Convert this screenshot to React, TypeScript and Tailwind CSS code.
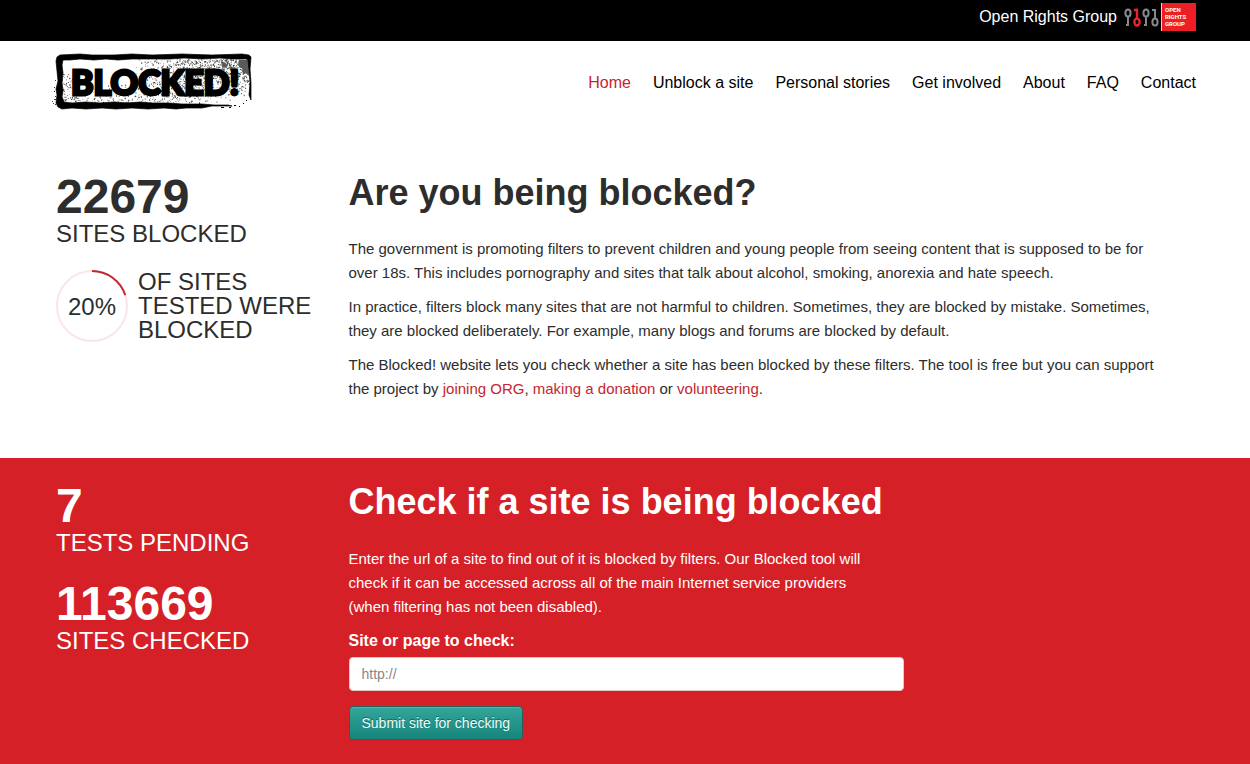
import type { ReactNode } from 'react';

const navItems = [
  { label: 'Home', href: '#home', active: true },
  { label: 'Unblock a site', href: '#unblock' },
  { label: 'Personal stories', href: '#stories' },
  { label: 'Get involved', href: '#involved' },
  { label: 'About', href: '#about' },
  { label: 'FAQ', href: '#faq' },
  { label: 'Contact', href: '#contact' },
];

// Fixed seed, so the stamp always gets the same ink specks
function makeSpecks() {
  let seed = 7;
  const random = () => {
    seed = (seed * 16807) % 2147483647;
    return seed / 2147483647;
  };
  const specks: { x: number; y: number; size: number }[] = [];
  for (let i = 0; i < 7000; i++) {
    const x = 9 + random() * 188;
    const y = 6 + random() * 45;
    const u = x / 198;
    const v = y / 56;
    // dense towards the top right corner, with a band fading to the bottom left
    const top = u > 0.42 ? Math.min(0.75, (u - 0.38) * 1.6) * Math.max(0, 1.05 - v * 1.3) : 0;
    const band = Math.max(0, 0.35 - Math.abs(v - 0.8 + (u - 0.45) * 0.6)) * (u > 0.8 ? 0.4 : 1);
    const edge = u < 0.12 && v > 0.35 ? 0.14 : 0;
    if (random() < top + band * 0.8 + edge) {
      specks.push({ x, y, size: 0.5 + random() * 0.7 });
    }
  }
  return specks;
}

const specks = makeSpecks();

function BlockedLogo() {
  return (
    <svg width="200" height="58" viewBox="0 0 200 58" role="img" aria-label="Blocked!">
      <g fill="#3a3a3a">
        {specks.map((s, i) => (
          <rect key={i} x={s.x} y={s.y} width={s.size} height={s.size} />
        ))}
        <path d="M187 7H197V23L194 20 191 22 190 15 186 12zM169 8L174 10 175 15 170 14zM178 12L181 15 179 18z" fill="#5a5a5a" />
        <path d="M3 27h1v1h-1zM2 38h1v1h-1zM3 43h1v1h-1zM2 46h2v1h-2zM0 48h1v1h-1zM2 34h1v1h-1zM3 51h1v1h-1zM1 50h1v1h-1z" />
      </g>
      <path
        fill="#000"
        stroke="#000"
        strokeWidth="0.700"
        fillRule="evenodd"
        d="M8 2L28 1 40 2 62 2 80 1 100 2 130 1 160 2 190 1 197 2 199 4 198 16 199 30 199 47 197 42 198 30 197 17 196 7 194 6 180 6 168 5 150 6 132 5 118 6 100 6 80 6 66 7 54 6 42 7 28 6 18 7 11 7 10 12 11 20 10 30 11 38 10 44 12 49 20 50 34 49 48 50 62 49 74 50 88 49 100 50 116 50 130 51 150 51 162 52 176 52 180 53 160 53 150 55 134 55 124 56 112 55 96 56 80 55 64 56 50 55 34 56 20 55 10 56 6 54 4 50 5 42 4 36 6 28 5 18 4 8 5 4z"
      />
      <path d="M182 52h2v1h-2zM187 53h1v1h-1zM177 54h2v1h-2zM169 54h3v1h-3zM191 50h1v1h-1zM194 47h1v1h-1z" />
      <text
        x="19"
        y="42"
        className="font-['Lato',sans-serif] text-[34px] font-black"
        fill="#000"
        stroke="#000"
        strokeWidth="2.800"
      >
        BLOCKED!
      </text>
    </svg>
  );
}

function OrgLogo() {
  return (
    <svg width="73" height="28" viewBox="0 0 73 28" role="img" aria-label="Open Rights Group logo">
      <g fill="none" strokeWidth="2" stroke="#85898b">
        <ellipse cx="5" cy="10" rx="2.600" ry="3.500" />
        <path d="M5 13.500V23M6 22h-3" />
        <ellipse cx="23" cy="10" rx="2.600" ry="3.500" />
        <path d="M23 13.500V23M24 22h-3" />
        <ellipse cx="32" cy="19" rx="2.600" ry="3.500" />
        <path d="M32 15.500V6M32 7h-3" />
      </g>
      <g fill="none" strokeWidth="2.400" stroke="#e0282b">
        <ellipse cx="14" cy="19" rx="2.600" ry="3.500" />
        <path d="M14 15.500V5.500M14 7h-3" />
      </g>
      <path fill="#ed1f24" d="M39 0h34v28H39z" />
      <path fill="#f8c9ca" d="M38 0h1v28h-1z" />
      <g fill="#fff" className="font-['Roboto',sans-serif] text-[6px] font-bold">
        <text x="42" y="9">OPEN</text>
        <text x="42" y="16">RIGHTS</text>
        <text x="42" y="23">GROUP</text>
      </g>
    </svg>
  );
}

function Container({ children, className = '' }: { children: ReactNode; className?: string }) {
  return <div className={`mx-auto w-full max-w-[1172px] pr-[15px] pl-[17px] ${className}`}>{children}</div>;
}

function Stat({ value, label }: { value: string; label: string }) {
  return (
    <div>
      <div className="text-5xl leading-[50px] font-bold">{value}</div>
      <div className="text-2xl leading-6 uppercase">{label}</div>
    </div>
  );
}

function PercentRing({ percent }: { percent: number }) {
  return (
    <svg width="72" height="72" viewBox="0 0 72 72" className="shrink-0">
      <circle cx="36" cy="36" r="35" fill="none" stroke="#fbe6e7" strokeWidth="2" />
      <circle
        cx="36"
        cy="36"
        r="35"
        fill="none"
        stroke="#c4262e"
        strokeWidth="2"
        pathLength="100"
        strokeDasharray={`${percent} 100`}
        transform="rotate(-90 36 36)"
      />
      <text x="36" y="45" textAnchor="middle" fill="#2d2d2d" className="text-2xl">
        {percent}%
      </text>
    </svg>
  );
}

function TextLink({ href, children }: { href: string; children: ReactNode }) {
  return (
    <a href={href} className="text-[#c4262e] hover:underline">
      {children}
    </a>
  );
}

export default function App() {
  return (
    <div className="flex min-h-screen flex-col bg-white font-['Liberation_Sans',Arial,sans-serif] text-base text-[#2d2d2d]">
      <div className="bg-black text-white">
        <Container className="flex justify-end pt-[3px] pb-2.5">
          <a href="#org" className="flex items-center gap-1.5">
            <span>Open Rights Group</span>
            <OrgLogo />
          </a>
        </Container>
      </div>

      <header>
        <Container className="flex items-start justify-between pt-3">
          <a href="#home" className="-ml-1">
            <BlockedLogo />
          </a>
          <nav className="flex gap-[22px] pt-[18px]">
            {navItems.map((item) => (
              <a key={item.label} href={item.href} className={item.active ? 'text-[#c4262e]' : 'text-black'}>
                {item.label}
              </a>
            ))}
          </nav>
        </Container>
      </header>

      <section className="pt-[61px] pb-[57px]">
        <Container className="grid grid-cols-4 gap-x-[30px]">
          <div className="flex flex-col gap-6">
            <Stat value="22679" label="Sites blocked" />
            <div className="flex gap-2.5">
              <PercentRing percent={20} />
              <div className="text-2xl leading-6 uppercase">Of sites tested were blocked</div>
            </div>
          </div>
          <div className="col-span-3">
            <h1 className="mb-[23px] text-4xl leading-[42px] font-bold">Are you being blocked?</h1>
            <div className="flex flex-col gap-2.5 text-[15px] leading-6">
              <p>
                The government is promoting filters to prevent children and young people from seeing content that is
                supposed to be for
                <br className="hidden lg:inline" /> over 18s. This includes pornography and sites that talk about
                alcohol, smoking, anorexia and hate speech.
              </p>
              <p>
                In practice, filters block many sites that are not harmful to children. Sometimes, they are blocked by
                mistake. Sometimes,
                <br className="hidden lg:inline" /> they are blocked deliberately. For example, many blogs and forums
                are blocked by default.
              </p>
              <p>
                The Blocked! website lets you check whether a site has been blocked by these filters. The tool is free
                but you can support
                <br className="hidden lg:inline" /> the project by <TextLink href="#join">joining ORG</TextLink>,{' '}
                <TextLink href="#donate">making a donation</TextLink> or{' '}
                <TextLink href="#volunteer">volunteering</TextLink>.
              </p>
            </div>
          </div>
        </Container>
      </section>

      <section className="grow bg-[#d52027] pt-[23px] pb-6 text-white">
        <Container className="grid grid-cols-4 gap-x-[30px]">
          <div className="flex flex-col gap-6">
            <Stat value="7" label="Tests pending" />
            <Stat value="113669" label="Sites checked" />
          </div>
          <form className="col-span-2" onSubmit={(e) => e.preventDefault()}>
            <h2 className="mb-6 text-4xl leading-[42px] font-bold">Check if a site is being blocked</h2>
            <p className="text-[15px] leading-6">
              Enter the url of a site to find out of it is blocked by filters. Our Blocked tool will
              <br className="hidden lg:inline" /> check if it can be accessed across all of the main Internet service
              providers
              <br className="hidden lg:inline" /> (when filtering has not been disabled).
            </p>
            <label htmlFor="site-url" className="mt-2.5 mb-1 block font-bold">
              Site or page to check:
            </label>
            <input
              id="site-url"
              type="text"
              placeholder="http://"
              className="block h-[34px] w-full rounded border border-[#e8c4c4] bg-white px-3 text-sm text-[#555] placeholder:text-[#888]"
            />
            <button
              type="submit"
              className="mt-[15px] h-[34px] rounded border border-[#2b5f5a] bg-linear-to-b from-[#33a69c] to-[#15847a] px-3 text-sm text-[#e8fffc] inset-shadow-[0_1px_0_#4fb5ac] text-shadow-[0_-1px_0_#14655e]"
            >
              Submit site for checking
            </button>
          </form>
        </Container>
      </section>
    </div>
  );
}
